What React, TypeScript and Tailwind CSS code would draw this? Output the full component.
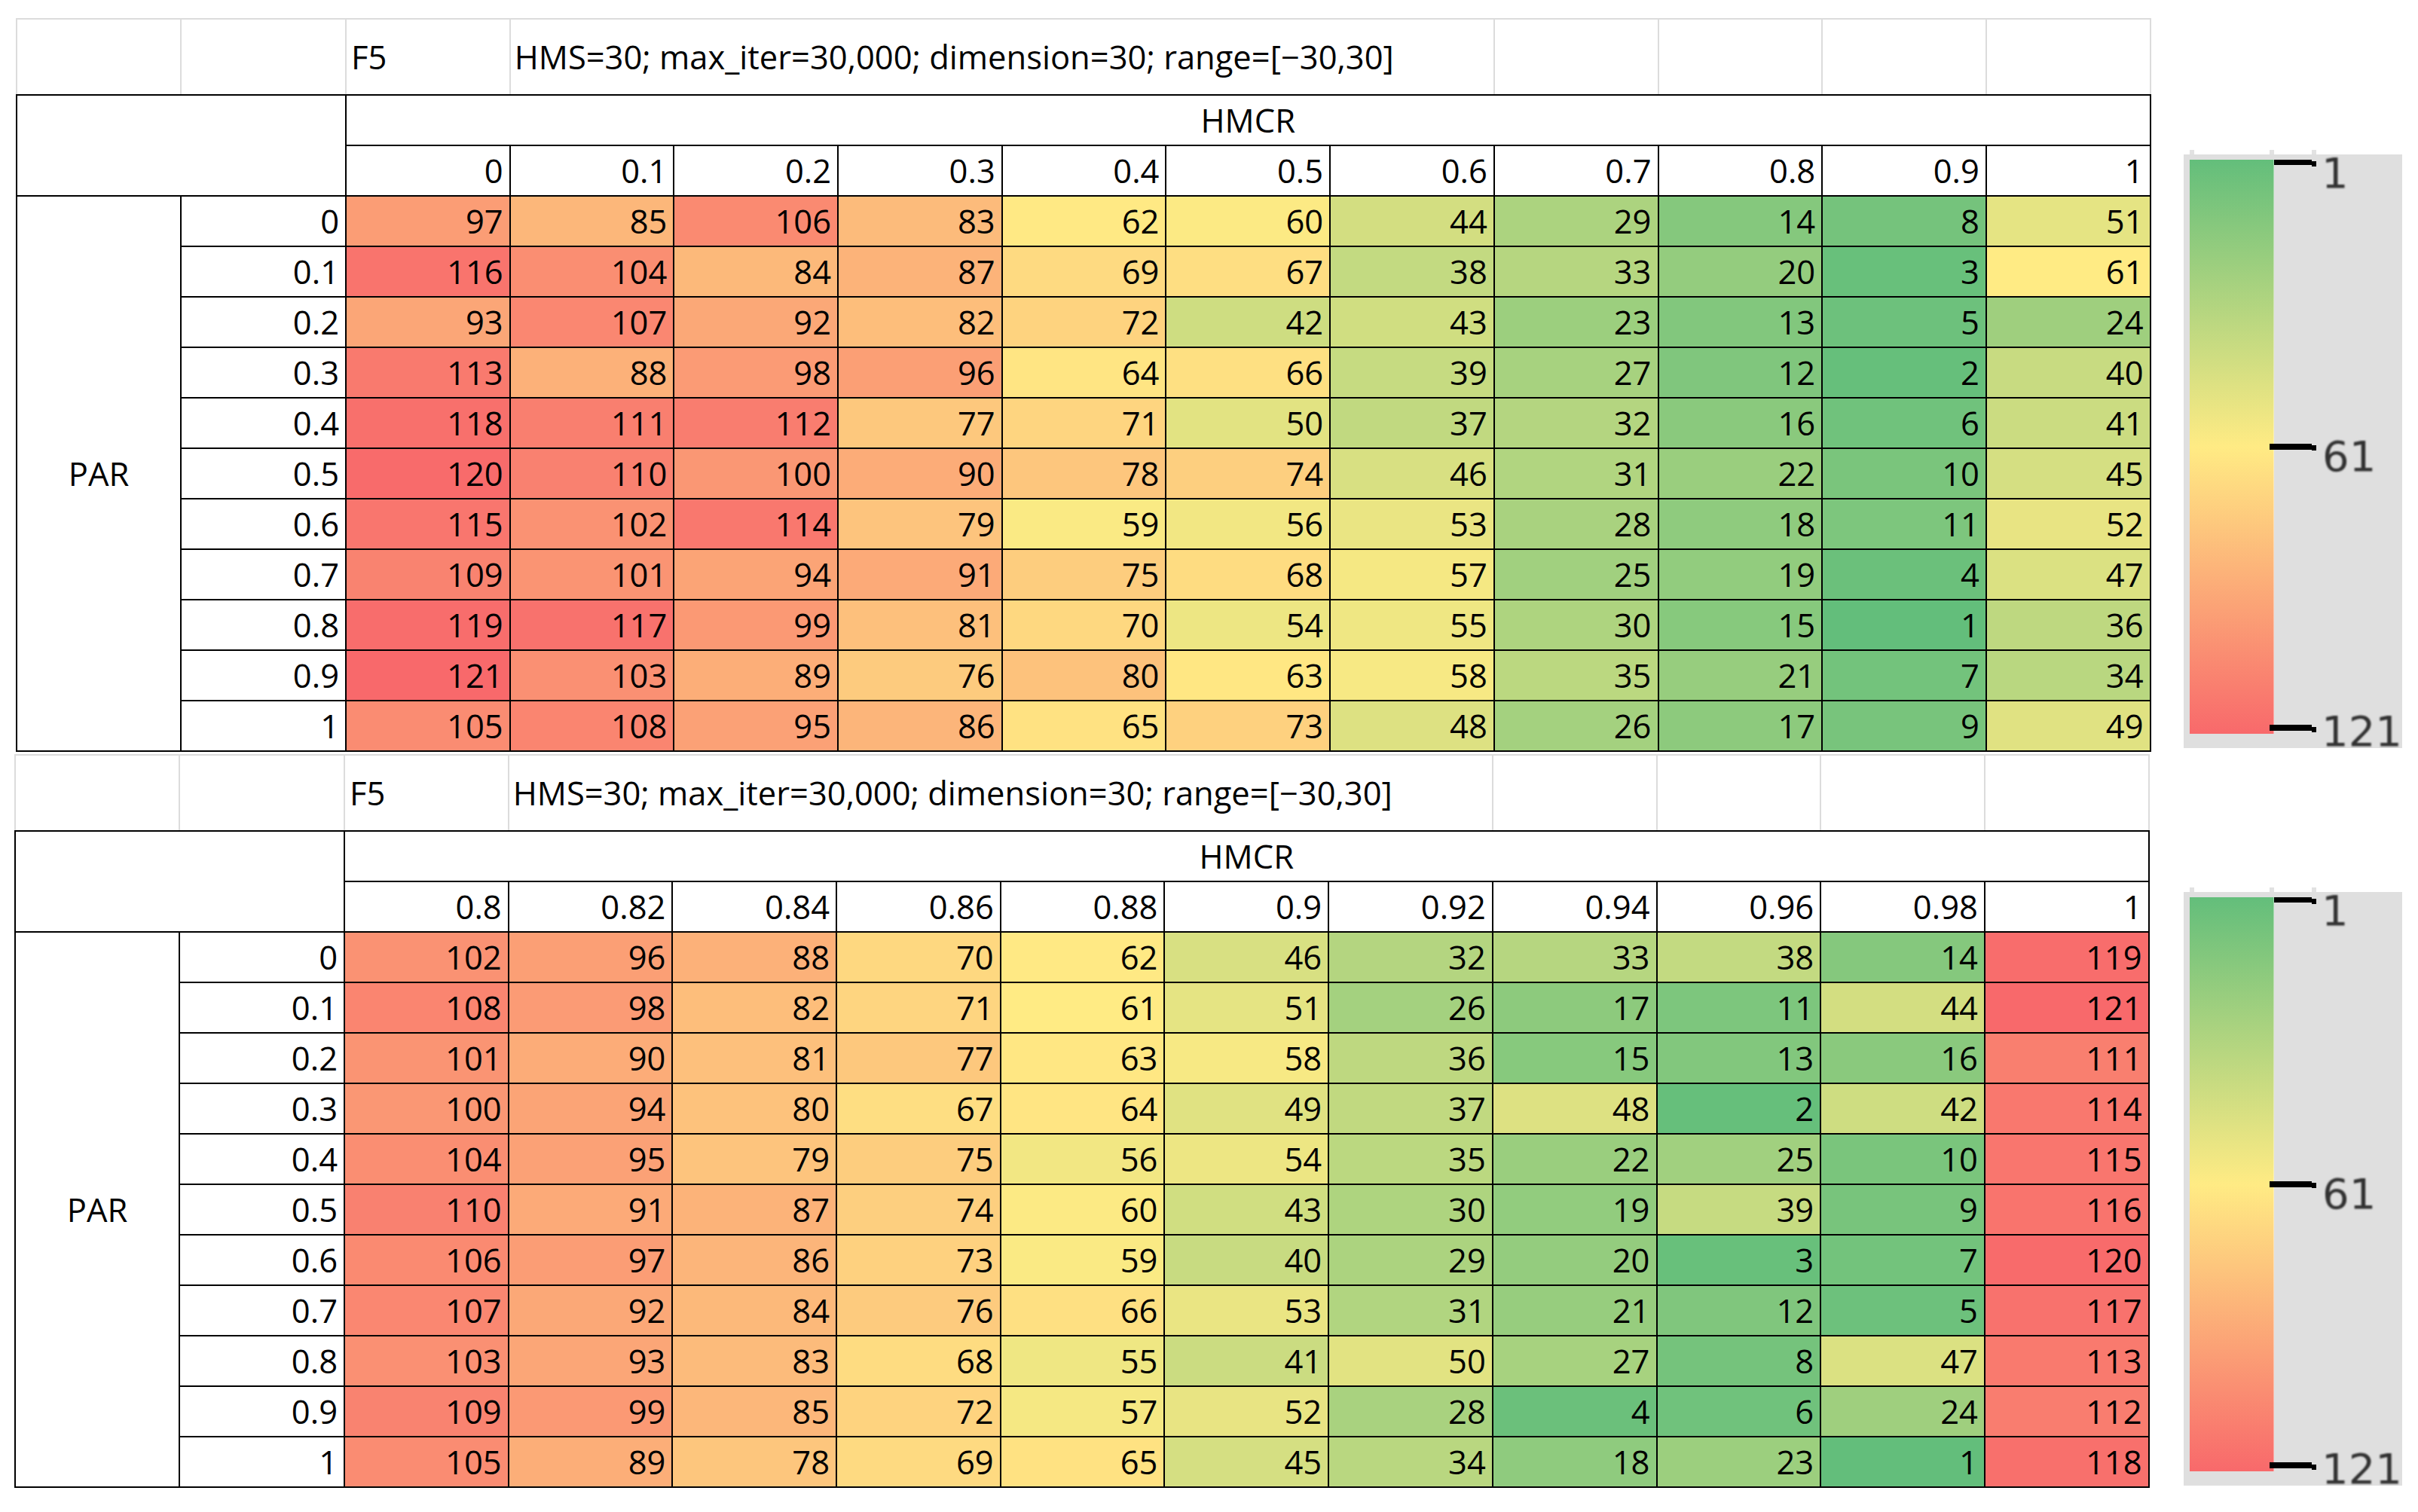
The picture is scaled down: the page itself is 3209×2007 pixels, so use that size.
import React from "react";

const T1 = {
  header: ["0", "0.1", "0.2", "0.3", "0.4", "0.5", "0.6", "0.7", "0.8", "0.9", "1"],
  rows: [
    [97, 85, 106, 83, 62, 60, 44, 29, 14, 8, 51],
    [116, 104, 84, 87, 69, 67, 38, 33, 20, 3, 61],
    [93, 107, 92, 82, 72, 42, 43, 23, 13, 5, 24],
    [113, 88, 98, 96, 64, 66, 39, 27, 12, 2, 40],
    [118, 111, 112, 77, 71, 50, 37, 32, 16, 6, 41],
    [120, 110, 100, 90, 78, 74, 46, 31, 22, 10, 45],
    [115, 102, 114, 79, 59, 56, 53, 28, 18, 11, 52],
    [109, 101, 94, 91, 75, 68, 57, 25, 19, 4, 47],
    [119, 117, 99, 81, 70, 54, 55, 30, 15, 1, 36],
    [121, 103, 89, 76, 80, 63, 58, 35, 21, 7, 34],
    [105, 108, 95, 86, 65, 73, 48, 26, 17, 9, 49],
  ],
};

const T2 = {
  header: ["0.8", "0.82", "0.84", "0.86", "0.88", "0.9", "0.92", "0.94", "0.96", "0.98", "1"],
  rows: [
    [102, 96, 88, 70, 62, 46, 32, 33, 38, 14, 119],
    [108, 98, 82, 71, 61, 51, 26, 17, 11, 44, 121],
    [101, 90, 81, 77, 63, 58, 36, 15, 13, 16, 111],
    [100, 94, 80, 67, 64, 49, 37, 48, 2, 42, 114],
    [104, 95, 79, 75, 56, 54, 35, 22, 25, 10, 115],
    [110, 91, 87, 74, 60, 43, 30, 19, 39, 9, 116],
    [106, 97, 86, 73, 59, 40, 29, 20, 3, 7, 120],
    [107, 92, 84, 76, 66, 53, 31, 21, 12, 5, 117],
    [103, 93, 83, 68, 55, 41, 50, 27, 8, 47, 113],
    [109, 99, 85, 72, 57, 52, 28, 4, 6, 24, 112],
    [105, 89, 78, 69, 65, 45, 34, 18, 23, 1, 118],
  ],
};

const PAR = ["0", "0.1", "0.2", "0.3", "0.4", "0.5", "0.6", "0.7", "0.8", "0.9", "1"];

function cellColor(v: number): string {
  const g = [99, 190, 123];
  const y = [255, 235, 132];
  const r = [248, 105, 107];
  let a: number[];
  let b: number[];
  let t: number;
  if (v <= 61) {
    a = g;
    b = y;
    t = (v - 1) / 60;
  } else {
    a = y;
    b = r;
    t = (v - 61) / 60;
  }
  const c = a.map((x, i) => Math.round(x + (b[i] - x) * t));
  return `rgb(${c[0]},${c[1]},${c[2]})`;
}

function ColorBar({ id }: { id: string }) {
  return (
    <svg width="290" height="794" className="block">
      <defs>
        <linearGradient id={`grad-${id}`} x1="0" y1="0" x2="0" y2="1">
          <stop offset="0" stopColor="#63BE7B" />
          <stop offset="0.5" stopColor="#FFEB84" />
          <stop offset="1" stopColor="#F8696B" />
        </linearGradient>
        <filter id={`soft-${id}`} x="-10%" y="-10%" width="120%" height="120%">
          <feGaussianBlur stdDeviation="0.8" />
        </filter>
        <clipPath id={`clip-${id}`}>
          <rect x="0" y="6" width="290" height="788" />
        </clipPath>
      </defs>
      <rect x="0" y="6" width="290" height="788" fill="#dfdfdf" />
      <rect x="8" y="0" width="6" height="6" fill="#e2e2e2" />
      <rect x="114" y="0" width="6" height="6" fill="#e2e2e2" />
      <rect x="170" y="0" width="6" height="6" fill="#e2e2e2" />
      <rect x="8" y="13" width="112" height="762" fill={`url(#grad-${id})`} />
      <rect x="119" y="13" width="1" height="762" fill="#ffffff" opacity="0.4" />
      <rect x="120" y="13" width="50" height="7" fill="#000" />
      <rect x="170" y="15" width="6" height="7" fill="#000" />
      <rect x="114" y="390" width="56" height="8" fill="#000" />
      <rect x="170" y="392" width="6" height="7" fill="#000" />
      <rect x="114" y="763" width="56" height="8" fill="#000" />
      <rect x="170" y="766" width="6" height="7" fill="#000" />
      <g filter={`url(#soft-${id})`} fill="#333333" fontFamily="'DejaVu Sans', sans-serif" fontSize="56">
        <text x="183" y="50">1</text>
        <text x="184" y="426">61</text>
      </g>
      <g clipPath={`url(#clip-${id})`}>
        <g filter={`url(#soft-${id})`} fill="#333333" fontFamily="'DejaVu Sans', sans-serif" fontSize="56">
          <text x="183" y="791">121</text>
        </g>
      </g>
    </svg>
  );
}

function Cell({ children, className = "", style }: { children?: React.ReactNode; className?: string; style?: React.CSSProperties }) {
  return (
    <div className={`flex items-center ${className}`} style={style}>
      {children}
    </div>
  );
}

function Block({ data, id, left, barLeft, barTop, topMargin }: { data: { header: string[]; rows: number[][] }; id: string; left: string; barLeft: string; barTop: string; topMargin: string }) {
  return (
    <div className={`flex items-start ${topMargin}`}>
      <div className={`${left} w-[2834px] shrink-0`}>
        {/* spreadsheet row with light gridlines */}
        <div className="grid grid-cols-[216px_217px_repeat(11,215.7px)] gap-x-[2px] bg-[#dcdcdc] pt-[2px] px-[2px] h-[101px]">
          <div className="bg-white" />
          <div className="bg-white" />
          <Cell className="bg-white pl-[6px]">F5</Cell>
          <Cell className="bg-white pl-[5px] col-span-6 whitespace-nowrap">HMS=30; max_iter=30,000; dimension=30; range=[−30,30]</Cell>
          <div className="bg-white" />
          <div className="bg-white" />
          <div className="bg-white" />
          <div className="bg-white" />
        </div>
        {/* bordered table */}
        <div className="grid grid-cols-[216px_217px_repeat(11,215.7px)] grid-rows-[repeat(13,65px)] gap-[2px] border-2 border-black bg-black">
          <div className="bg-white col-span-2 row-span-2" />
          <Cell className="bg-white col-span-11 justify-center">HMCR</Cell>
          {data.header.map((h, i) => (
            <Cell key={`h${i}`} className="bg-white justify-end pr-[8px]">
              {h}
            </Cell>
          ))}
          <Cell className="bg-white row-span-11 justify-center">PAR</Cell>
          {data.rows.map((row, ri) => (
            <React.Fragment key={`r${ri}`}>
              <Cell className="bg-white justify-end pr-[8px]">{PAR[ri]}</Cell>
              {row.map((v, ci) => (
                <Cell key={`c${ri}-${ci}`} className="justify-end pr-[8px]" style={{ backgroundColor: cellColor(v) }}>
                  {v}
                </Cell>
              ))}
            </React.Fragment>
          ))}
        </div>
      </div>
      <div className={`${barLeft} ${barTop} shrink-0`}>
        <ColorBar id={id} />
      </div>
    </div>
  );
}

export default function App() {
  return (
    <div className="w-[3209px] h-[2007px] overflow-hidden bg-white text-black font-['Open_Sans',sans-serif] font-medium text-[43.5px] leading-none">
      <div className="flex flex-col pt-[24px]">
        <Block data={T1} id="a" left="ml-[21px]" barLeft="ml-[43px]" barTop="mt-[175px]" topMargin="" />
        <Block data={T2} id="b" left="ml-[19px]" barLeft="ml-[45px]" barTop="mt-[177px]" topMargin="mt-[3px]" />
      </div>
    </div>
  );
}
